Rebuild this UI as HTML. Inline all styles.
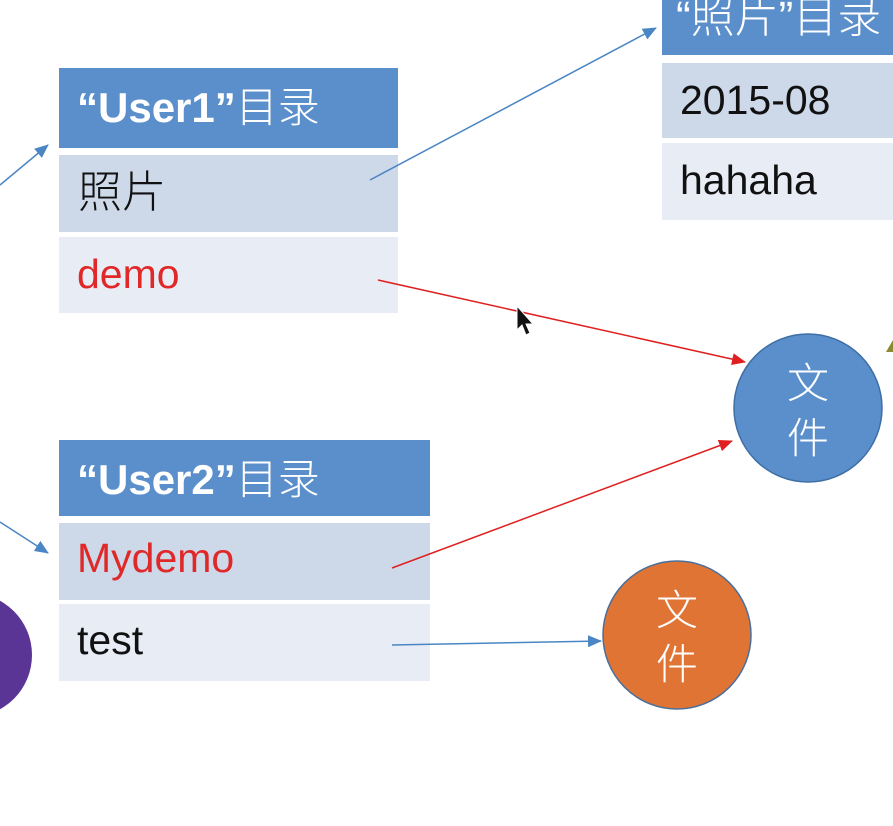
<!DOCTYPE html>
<html><head><meta charset="utf-8"><style>
html,body{margin:0;padding:0;background:#fff;width:893px;height:826px;overflow:hidden}
svg{display:block}
text{font-family:"Liberation Sans","Noto Sans CJK SC",sans-serif}
.h{fill:#fff;font-size:42px}
.b{font-weight:bold}
.c{font-weight:300;font-size:42px}
.r{font-size:41px}
</style></head><body>
<svg width="893" height="826" viewBox="0 0 893 826" xmlns="http://www.w3.org/2000/svg">
<defs>
<marker id="ar" markerWidth="14" markerHeight="12" refX="13" refY="6" orient="auto" markerUnits="userSpaceOnUse"><path d="M0,0 L14,6 L0,12 z" fill="#e02020"/></marker>
<marker id="ab2" markerWidth="14" markerHeight="12" refX="13" refY="6" orient="auto" markerUnits="userSpaceOnUse"><path d="M0,0 L14,6 L0,12 z" fill="#4a86c5"/></marker>
</defs>
<!-- table 1 -->
<rect x="59" y="68" width="339" height="80" fill="#5b8fcb"/>
<rect x="59" y="155" width="339" height="77" fill="#cdd8e9"/>
<rect x="59" y="237" width="339" height="76" fill="#e8edf5"/>
<text class="h" x="77" y="122"><tspan class="b">“User1”</tspan><tspan class="c">目录</tspan></text>
<text x="78" y="207" fill="#111" font-size="44" font-weight="300">照片</text>
<text class="r" x="77" y="288" fill="#e02828">demo</text>
<!-- table 2 -->
<rect x="59" y="440" width="371" height="76" fill="#5b8fcb"/>
<rect x="59" y="523" width="371" height="77" fill="#cdd8e9"/>
<rect x="59" y="604" width="371" height="77" fill="#e8edf5"/>
<text class="h" x="77" y="494"><tspan class="b">“User2”</tspan><tspan class="c">目录</tspan></text>
<text class="r" x="77" y="572" fill="#e02828">Mydemo</text>
<text class="r" x="77" y="654" fill="#111">test</text>
<!-- table 3 -->
<rect x="662" y="-20" width="240" height="75" fill="#5b8fcb"/>
<rect x="662" y="63" width="240" height="75" fill="#cdd8e9"/>
<rect x="662" y="143" width="240" height="77" fill="#e8edf5"/>
<text x="676" y="32" fill="#fff" font-size="44" font-weight="300">“照片”目录</text>
<text class="r" x="680" y="114" fill="#111">2015-08</text>
<text class="r" x="680" y="194" fill="#111">hahaha</text>
<!-- circles -->
<circle cx="808" cy="408" r="74" fill="#5b8fcb" stroke="#3d6ea6" stroke-width="1.5"/>
<text x="808" y="398" text-anchor="middle" fill="#fff" font-size="42" font-weight="300">文</text>
<text x="808" y="453" text-anchor="middle" fill="#fff" font-size="42" font-weight="300">件</text>
<circle cx="677" cy="635" r="74" fill="#e07435" stroke="#4a6f9a" stroke-width="1.5"/>
<text x="677" y="625" text-anchor="middle" fill="#fff" font-size="42" font-weight="300">文</text>
<text x="677" y="679" text-anchor="middle" fill="#fff" font-size="42" font-weight="300">件</text>
<circle cx="-30" cy="655" r="62" fill="#5b3595"/>
<!-- arrows -->
<line x1="0" y1="185" x2="48" y2="145" stroke="#4a86c5" stroke-width="1.5" marker-end="url(#ab2)"/>
<line x1="370" y1="180" x2="656" y2="28" stroke="#4a86c5" stroke-width="1.5" marker-end="url(#ab2)"/>
<line x1="378" y1="280" x2="745" y2="362" stroke="#e02020" stroke-width="1.5" marker-end="url(#ar)"/>
<line x1="392" y1="568" x2="732" y2="441" stroke="#e02020" stroke-width="1.5" marker-end="url(#ar)"/>
<line x1="392" y1="645" x2="601" y2="641" stroke="#4a86c5" stroke-width="1.5" marker-end="url(#ab2)"/>
<line x1="0" y1="522" x2="48" y2="553" stroke="#4a86c5" stroke-width="1.5" marker-end="url(#ab2)"/>
<path d="M886,352 L893,340 L893,352 z" fill="#8a8a30"/>
<!-- cursor -->
<path d="M517,306 L517,330 L522,325 L526,335 L530,333 L526,324 L533,324 z" fill="#111" stroke="#fff" stroke-width="1"/>
</svg>
</body></html>
